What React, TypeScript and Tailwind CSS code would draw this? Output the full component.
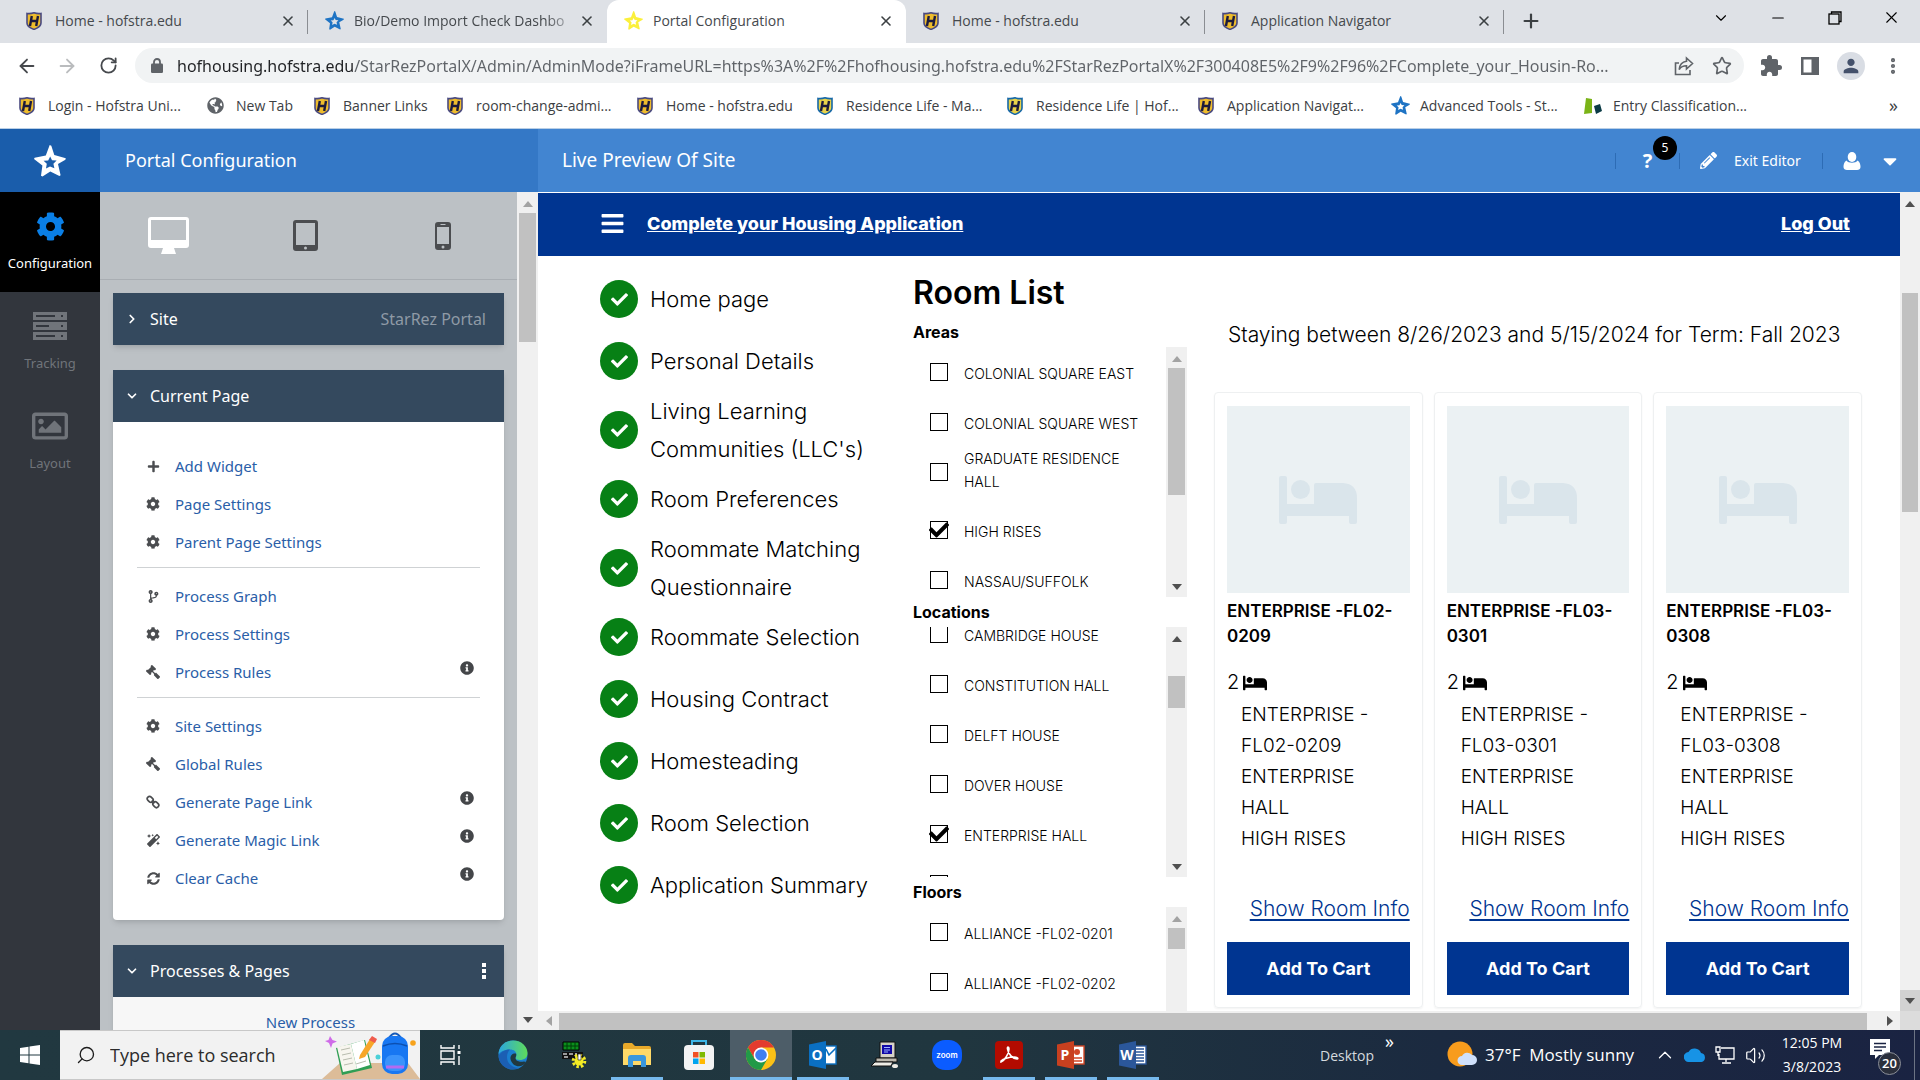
import React, { useState } from 'react';
import clsx from 'clsx';
import {
  FaBars,
  FaBed,
  FaCaretDown,
  FaCheck,
  FaCodeBranch,
  FaCog,
  FaGavel,
  FaGlobeAmericas,
  FaInfoCircle,
  FaMagic,
  FaPencilAlt,
  FaPlus,
  FaRegImage,
  FaSyncAlt,
} from 'react-icons/fa';
import { MdExtension, MdPerson } from 'react-icons/md';
import {
  ArrowLeft,
  ArrowRight,
  ChevronDown,
  ChevronRight,
  ChevronUp,
  Minus,
  MoreVertical,
  Plus,
  RotateCw,
  Search,
  Star,
  Volume2,
  X,
} from 'lucide-react';

/* ---------- small drawings ---------- */

const Shield: React.FC<{ blue?: boolean }> = ({ blue }) => (
  <svg viewBox="0 0 16 18" className="h-[18px] w-4 shrink-0">
    <path
      d="M1 1.5C4 2 6 1.5 8 .8 10 1.5 12 2 15 1.5V11c0 3-3 5-7 6.4C4 16 1 14 1 11Z"
      fill={blue ? '#e9d24a' : '#eebc2c'}
      stroke={blue ? '#1668a8' : '#4a4a80'}
      strokeWidth="1.6"
    />
    <path d="M5.800 4 4 14M12 4 10.200 14M5 9H11" fill="none" stroke="#1c1a3c" strokeWidth="2.4" />
  </svg>
);

const StarLogo: React.FC<{ className: string }> = ({ className }) => (
  <svg viewBox="0 0 32 32" className={clsx('shrink-0', className)} fill="currentColor" fillRule="evenodd">
    <path d="M15.700 0 17.300 .8 20.300 10 31.800 13.200 31.400 14.800 24 19 26.600 30.200 25.400 31 16.300 26.500 8.500 31.500 7 30.800 8.400 20.500 0 14 .6 12.800 11.800 10.600ZM16.200 11.600 14.200 15.400 9.600 15.800 12.800 18.800 12 23.600 16 21.400 20.400 23.200 19.400 18.800 22.600 15.400 18 15.200Z" />
  </svg>
);

const ServerRows = () => (
  <svg viewBox="0 0 34 28" className="h-7 w-[34px]" fill="currentColor" fillRule="evenodd">
    <path d="M0 0H34V8H0ZM3 3V5H22V3ZM28 3V5H30V3Z" />
    <path d="M0 10H34V18H0ZM3 13V15H16V13ZM28 13V15H30V13Z" />
    <path d="M0 20H34V28H0ZM3 23V25H22V23ZM28 23V25H30V23Z" />
  </svg>
);

const ChainLink = () => (
  <svg viewBox="0 0 14 14" className="size-[14px]" fill="none" stroke="currentColor" strokeWidth="1.7">
    <rect x="1" y="2" width="6.4" height="4.6" rx="2.3" transform="rotate(45 4.2 4.3)" />
    <rect x="6.6" y="7.4" width="6.4" height="4.6" rx="2.3" transform="rotate(45 9.8 9.7)" />
    <path d="M5.6 5.6 8.4 8.4" />
  </svg>
);

const Desktop = () => (
  <svg viewBox="0 0 41 37" className="h-[37px] w-[41px]" fill="currentColor" fillRule="evenodd">
    <path d="M3 0H38A3 3 0 0 1 41 3V28A3 3 0 0 1 38 31H26L28 37H13L15 31H3A3 3 0 0 1 0 28V3A3 3 0 0 1 3 0ZM3 3V23H38V3Z" />
  </svg>
);

const Tablet = () => (
  <svg viewBox="0 0 25 31" className="h-[31px] w-[25px]" fill="currentColor" fillRule="evenodd">
    <path d="M3 0H22A3 3 0 0 1 25 3V28A3 3 0 0 1 22 31H3A3 3 0 0 1 0 28V3A3 3 0 0 1 3 0ZM3 3V25H22V3ZM12.5 26.5A1.5 1.5 0 1 0 12.5 29.5 1.5 1.5 0 1 0 12.5 26.5Z" />
  </svg>
);

const Phone = () => (
  <svg viewBox="0 0 16 28" className="h-7 w-4" fill="currentColor" fillRule="evenodd">
    <path d="M3 0H13A3 3 0 0 1 16 3V25A3 3 0 0 1 13 28H3A3 3 0 0 1 0 25V3A3 3 0 0 1 3 0ZM2 5V22H14V5ZM5.5 2V3H10.5V2ZM8 23.5A1.5 1.5 0 1 0 8 26.5 1.5 1.5 0 1 0 8 23.5Z" />
  </svg>
);

const UserBust: React.FC = () => (
  <svg viewBox="0 0 18 18" className="size-[18px]" fill="currentColor">
    <ellipse cx="9" cy="5" rx="4.300" ry="5" />
    <path d="M3.500 8.500C5 11.500 13 11.500 14.500 8.500 17 10 17.500 13 17.500 15 17.500 17 16 18 14 18H4C2 18 .5 17 .5 15 .5 13 1 10 3.500 8.500Z" />
  </svg>
);

const BedPlaceholder = () => (
  <svg viewBox="0 0 78 48" className="h-12 w-[78px]" fill="#dae5eb">
    <path d="M2 0H6Q8 0 8 2V28H35V9Q35 7 37 7H64Q78 8 78 22V46Q78 48 76 48H72Q70 48 70 46V40H8V46Q8 48 6 48H2Q0 48 0 46V2Q0 0 2 0Z" />
    <circle cx="21.500" cy="13.500" r="9.500" />
  </svg>
);

/* ---------- scroll bars ---------- */

const Arrow: React.FC<{ dir: 'up' | 'down' | 'left' | 'right'; dim?: boolean }> = ({ dir, dim }) => (
  <svg
    viewBox="0 0 10 6"
    className={clsx(
      'h-[6px] w-[10px]',
      dir === 'down' && 'rotate-180',
      dir === 'left' && '-rotate-90',
      dir === 'right' && 'rotate-90',
      dim ? 'text-[#a3a3a3]' : 'text-[#505050]',
    )}
  >
    <path d="M0 6 5 0 10 6Z" fill="currentColor" />
  </svg>
);

const ScrollBar: React.FC<{ thumb: string; dimUp?: boolean; pressed?: boolean }> = ({ thumb, dimUp, pressed }) => (
  <div className={clsx('flex shrink-0 flex-col bg-[#f0f0f0]', pressed ? 'w-5' : 'w-[21px]')}>
    <button aria-label="Scroll up" className="flex h-[21px] shrink-0 items-center justify-center pt-[2px]">
      <Arrow dir="up" dim={dimUp} />
    </button>
    <div className={clsx('mx-[2px] shrink-0 bg-[#c1c1c1]', thumb)} />
    <div className="flex-1" />
    <button
      aria-label="Scroll down"
      className={clsx('flex h-[21px] shrink-0 items-center justify-center', pressed && 'bg-[#d2d2d2]')}
    >
      <Arrow dir="down" />
    </button>
  </div>
);

/* ---------- browser chrome ---------- */

const tabs = [
  { title: 'Home - hofstra.edu', icon: <Shield /> },
  { title: 'Bio/Demo Import Check Dashbo', icon: <StarLogo className="size-[19px] text-[#1f74c4]" />, fade: true },
  { title: 'Portal Configuration', icon: <StarLogo className="size-[19px] text-[#fbf03c]" />, active: true },
  { title: 'Home - hofstra.edu', icon: <Shield /> },
  { title: 'Application Navigator', icon: <Shield /> },
];

const TabStrip = () => (
  <div className="flex h-[43px] shrink-0 items-stretch bg-[#dee1e6] pl-[9px]">
    {tabs.map((tab, i) => (
      <div
        key={i}
        className={clsx(
          'relative flex w-[299px] min-w-0 items-center pr-3 pb-[2px] pl-4',
          tab.active && 'rounded-t-xl bg-white',
        )}
      >
        <span className="flex w-[30px] shrink-0 justify-start pl-px">{tab.icon}</span>
        <span
          className={clsx(
            'min-w-0 flex-1 text-[14px] whitespace-nowrap text-[#45494d]',
            tab.fade && '[mask-image:linear-gradient(to_right,black_85%,transparent)]',
          )}
        >
          {tab.title}
        </span>
        <button aria-label="Close tab" className="text-[#3c4043]">
          <X size={16} strokeWidth={2.4} />
        </button>
        {(i === 0 || i > 2) && <span className="absolute top-[10px] right-0 h-6 w-px bg-[#8a8d92]" />}
      </div>
    ))}
    <button aria-label="New tab" className="ml-4 pb-[2px] text-[#3c4043]">
      <Plus size={22} strokeWidth={2.4} />
    </button>
    <div className="ml-auto flex text-black">
      <button aria-label="Search tabs" className="flex w-[57px] items-center justify-center pb-2">
        <ChevronDown size={18} strokeWidth={1.5} />
      </button>
      <button aria-label="Minimize" className="flex w-[57px] items-center justify-center pb-2">
        <Minus size={18} strokeWidth={1.5} />
      </button>
      <button aria-label="Restore" className="flex w-[57px] items-center justify-center pb-2">
        <svg viewBox="0 0 14 14" className="size-[14px]" fill="none" stroke="currentColor" strokeWidth="1.3">
          <rect x="1" y="3" width="10" height="10" />
          <path d="M3.500 3V1H13V10.500H11" />
        </svg>
      </button>
      <button aria-label="Close" className="flex w-[57px] items-center justify-center pb-2">
        <X size={19} strokeWidth={1.4} />
      </button>
    </div>
  </div>
);

const AddressBar = () => {
  const [url, setUrl] = useState(
    'hofhousing.hofstra.edu/StarRezPortalX/Admin/AdminMode?iFrameURL=https%3A%2F%2Fhofhousing.hofstra.edu%2FStarRezPortalX%2F300408E5%2F9%2F96%2FComplete_your_Housin-Ro...',
  );

  return (
    <div className="flex h-[45px] shrink-0 items-center bg-white pl-[7px] text-[#5f6368]">
      <button aria-label="Back" className="flex w-10 justify-center text-[#46494d]">
        <ArrowLeft size={22} />
      </button>
      <button aria-label="Forward" className="flex w-10 justify-center text-[#babcbe]">
        <ArrowRight size={22} />
      </button>
      <button aria-label="Reload" className="flex w-[42px] justify-center text-[#46494d]">
        <RotateCw size={19} strokeWidth={2.3} />
      </button>
      <div className="ml-[6px] flex h-[35px] min-w-0 flex-1 items-center rounded-full bg-[#f1f3f4] pr-3 pl-4">
        <svg viewBox="0 0 12 15" className="h-[15px] w-3 shrink-0">
          <rect y="5.500" width="12" height="9.500" rx="1.200" fill="currentColor" />
          <path d="M3 6V4a3 3 0 0 1 6 0v2" fill="none" stroke="currentColor" strokeWidth="1.8" />
        </svg>
        <input
          aria-label="Address"
          value={url}
          onChange={(e) => setUrl(e.target.value)}
          className="ml-[14px] min-w-0 flex-1 bg-[linear-gradient(90deg,#202124_177px,#5f6368_177px)] bg-clip-text font-['Noto_Sans',sans-serif] text-[16px] text-transparent outline-none"
        />
        <button aria-label="Share" className="ml-3">
          <svg viewBox="0 0 20 20" className="size-5" fill="none" stroke="currentColor" strokeWidth="1.6">
            <path d="M5 7H1.500V18.500H16V14" />
            <path d="M12.500 2 18.500 7.500 12.500 13V9.800C9 9.800 6.800 11 5.200 13.500 5.600 9 8 5.800 12.500 5.200Z" />
          </svg>
        </button>
        <button aria-label="Bookmark" className="ml-[18px]">
          <Star size={20} />
        </button>
      </div>
      <button aria-label="Extensions" className="ml-[15px] flex">
        <MdExtension size={24} />
      </button>
      <button aria-label="Side panel" className="ml-[18px] flex">
        <svg viewBox="0 0 18 18" className="size-[18px]">
          <path d="M0 0H18V18H0ZM2.500 2.500V15.500H10.500V2.500Z" fill="currentColor" fillRule="evenodd" />
        </svg>
      </button>
      <button
        aria-label="Profile"
        className="mx-[18px] flex size-7 items-center justify-center rounded-full bg-[#d9dde4] text-[#44516b]"
      >
        <MdPerson size={22} />
      </button>
      <button aria-label="Menu" className="mr-[17px]">
        <MoreVertical size={20} strokeWidth={3} />
      </button>
    </div>
  );
};

const bookmarks = [
  { title: 'Login - Hofstra Uni...', icon: <Shield />, width: 'w-[188px]' },
  { title: 'New Tab', icon: <FaGlobeAmericas size={17} className="text-[#5f6368]" />, width: 'w-[107px]' },
  { title: 'Banner Links', icon: <Shield />, width: 'w-[133px]' },
  { title: 'room-change-admi...', icon: <Shield />, width: 'w-[190px]' },
  { title: 'Home - hofstra.edu', icon: <Shield />, width: 'w-[180px]' },
  { title: 'Residence Life - Ma...', icon: <Shield blue />, width: 'w-[190px]' },
  { title: 'Residence Life | Hof...', icon: <Shield blue />, width: 'w-[191px]' },
  { title: 'Application Navigat...', icon: <Shield />, width: 'w-[193px]' },
  { title: 'Advanced Tools - St...', icon: <StarLogo className="size-[19px] text-[#1f74c4]" />, width: 'w-[193px]' },
  {
    title: 'Entry Classification...',
    icon: (
      <svg viewBox="0 0 18 16" className="h-4 w-[18px]">
        <path d="M2 0 8 1 8 15 0 16Z" fill="#7ab317" />
        <path d="M10 8 16 6 18 13 12 16Z" fill="#0b3b46" />
      </svg>
    ),
    width: 'w-[190px]',
  },
];

const BookmarkBar = () => (
  <div className="flex h-[41px] shrink-0 items-center border-b border-[#b9cfe6] bg-white pr-[22px] pb-[5px] pl-[19px]">
    {bookmarks.map((b) => (
      <a key={b.title} href="#" className={clsx('flex shrink-0 items-center text-[#3c4043]', b.width)}>
        <span className="flex w-[29px] shrink-0">{b.icon}</span>
        <span className="text-[14px] whitespace-nowrap">{b.title}</span>
      </a>
    ))}
    <button aria-label="More bookmarks" className="ml-auto text-[18px] text-[#3c4043]">
      »
    </button>
  </div>
);

/* ---------- StarRez shell ---------- */

const AppHeader = () => (
  <header className="flex h-[63px] shrink-0 items-stretch bg-[#4285d1] font-['Noto_Sans',sans-serif] text-white">
    <a href="#" aria-label="StarRez" className="flex w-[100px] items-center justify-center bg-[#1a5dab]">
      <StarLogo className="size-8" />
    </a>
    <h1 className="flex w-[438px] items-center bg-[#3478c6] pl-[25px] text-[18px]">Portal Configuration</h1>
    <h2 className="flex flex-1 items-center pl-6 text-[19px]">Live Preview Of Site</h2>
    <div className="flex items-center">
      <span className="h-4 w-px bg-[#2d6cb5]" />
      <button aria-label="Help" className="relative flex w-[63px] justify-center text-[20px] font-bold">
        ?
        <span className="absolute -top-[10px] right-[2px] flex size-6 items-center justify-center rounded-full bg-black text-[12px] font-normal">
          5
        </span>
      </button>
      <span className="h-4 w-px bg-[#2d6cb5]" />
      <button className="flex w-[142px] items-center gap-[17px] pl-[20px] text-[14px] whitespace-nowrap">
        <FaPencilAlt size={17} />
        Exit Editor
      </button>
      <span className="h-4 w-px bg-[#2d6cb5]" />
      <button aria-label="Account" className="flex w-[97px] items-center gap-[18px] pl-[20px]">
        <UserBust />
        <FaCaretDown size={22} />
      </button>
    </div>
  </header>
);

const sections = [
  { label: 'Configuration', icon: <FaCog size={29} className="text-[#0a7fe6]" />, active: true },
  { label: 'Tracking', icon: <ServerRows /> },
  { label: 'Layout', icon: <FaRegImage size={36} /> },
];

const SideNav = () => (
  <nav className="w-[100px] shrink-0 bg-[#32363d] text-[#70747a]">
    {sections.map((s) => (
      <a
        key={s.label}
        href="#"
        className={clsx(
          'flex h-[100px] flex-col items-center pt-[16px] text-[13px]',
          s.active && 'bg-black text-white',
        )}
      >
        <span className="flex h-9 items-center">{s.icon}</span>
        <span className="mt-[10px]">{s.label}</span>
      </a>
    ))}
  </nav>
);

const menuGroups = [
  [
    { label: 'Add Widget', icon: <FaPlus size={13} /> },
    { label: 'Page Settings', icon: <FaCog size={14} /> },
    { label: 'Parent Page Settings', icon: <FaCog size={14} /> },
  ],
  [
    { label: 'Process Graph', icon: <FaCodeBranch size={13} /> },
    { label: 'Process Settings', icon: <FaCog size={14} /> },
    { label: 'Process Rules', icon: <FaGavel size={14} className="-scale-x-100" />, info: true },
  ],
  [
    { label: 'Site Settings', icon: <FaCog size={14} /> },
    { label: 'Global Rules', icon: <FaGavel size={14} className="-scale-x-100" /> },
    { label: 'Generate Page Link', icon: <ChainLink />, info: true },
    { label: 'Generate Magic Link', icon: <FaMagic size={13} />, info: true },
    { label: 'Clear Cache', icon: <FaSyncAlt size={13} />, info: true },
  ],
];

const CardHeader: React.FC<{ title: string; open?: boolean; children?: React.ReactNode }> = ({ title, open, children }) => (
  <button className="flex h-[52px] w-full items-center bg-[#34495e] pr-[18px] pl-3 text-[16px] text-white">
    <span className="flex w-[25px]">
      {open ? <ChevronDown size={14} strokeWidth={3} /> : <ChevronRight size={14} strokeWidth={3} />}
    </span>
    {title}
    <span className="ml-auto text-[#8f9aa6]">{children}</span>
  </button>
);

const ConfigPanel = () => (
  <div className="flex w-[438px] shrink-0">
    <div className="min-w-0 flex-1 overflow-hidden bg-[#bcc1c5]">
      <div className="grid h-[88px] grid-cols-3 border-b border-[#a9aeb3] pr-[6px] text-[#4b4d50]">
        <button aria-label="Desktop preview" className="flex items-center justify-center text-white">
          <Desktop />
        </button>
        <button aria-label="Tablet preview" className="flex items-center justify-center">
          <Tablet />
        </button>
        <button aria-label="Phone preview" className="flex items-center justify-center">
          <Phone />
        </button>
      </div>
      <div className="flex flex-col gap-[25px] px-[13px] pt-[13px]">
        <section className="shadow-md">
          <CardHeader title="Site">StarRez Portal</CardHeader>
        </section>
        <section className="overflow-hidden rounded-b-sm bg-white shadow-md">
          <CardHeader title="Current Page" open />
          <div className="px-6 pt-[25px] pb-[23px]">
            {menuGroups.map((group, g) => (
              <ul key={g} className={clsx(g > 0 && 'mt-[6px] border-t border-[#cfd2d4] pt-[9px]')}>
                {group.map((item) => (
                  <li key={item.label} className="flex h-[38px] items-center pr-[6px] text-[15px]">
                    <a href="#" className="flex items-center text-[#2a5ea8]">
                      <span className="flex w-8 justify-center text-[#4b4d50]">{item.icon}</span>
                      <span className="pl-[6px]">{item.label}</span>
                    </a>
                    {'info' in item && (
                      <button aria-label="More information" className="mb-2 ml-auto text-[#444649]">
                        <FaInfoCircle size={14} />
                      </button>
                    )}
                  </li>
                ))}
              </ul>
            ))}
          </div>
        </section>
        <section className="bg-[#f7f7f7] shadow-md">
          <CardHeader title="Processes & Pages" open>
            <span className="flex flex-col gap-[2px]">
              <span className="size-1 bg-white" />
              <span className="size-1 bg-white" />
              <span className="size-1 bg-white" />
            </span>
          </CardHeader>
          <a href="#" className="flex h-20 justify-center pt-[14px] pl-1 text-[15px] text-[#2a5ea8]">
            New Process
          </a>
        </section>
      </div>
    </div>
    <ScrollBar thumb="h-[129px]" dimUp />
  </div>
);

/* ---------- housing portal ---------- */

const steps = [
  'Home page',
  'Personal Details',
  "Living Learning Communities (LLC's)",
  'Room Preferences',
  'Roommate Matching Questionnaire',
  'Roommate Selection',
  'Housing Contract',
  'Homesteading',
  'Room Selection',
  'Application Summary',
];

const StepList = () => (
  <ol className="w-[313px] shrink-0 pt-3">
    {steps.map((step) => (
      <li key={step} className="flex min-h-[62px] items-center gap-3 text-[22px] leading-[38px] font-light">
        <span className="flex size-[38px] shrink-0 items-center justify-center rounded-full bg-[#078015] text-white">
          <FaCheck size={17} />
        </span>
        <a href="#" className="w-[230px]">
          {step}
        </a>
      </li>
    ))}
  </ol>
);

interface Option {
  label: string;
  checked?: boolean;
  tall?: boolean;
}

const filters: { title: string; options: Option[]; thumb: string; scrolled?: boolean }[] = [
  {
    title: 'Areas',
    thumb: 'h-[127px]',
    options: [
      { label: 'COLONIAL SQUARE EAST' },
      { label: 'COLONIAL SQUARE WEST' },
      { label: 'GRADUATE RESIDENCE HALL', tall: true },
      { label: 'HIGH RISES', checked: true },
      { label: 'NASSAU/SUFFOLK' },
    ],
  },
  {
    title: 'Locations',
    thumb: 'mt-7 h-8',
    scrolled: true,
    options: [
      { label: 'CAMBRIDGE HOUSE' },
      { label: 'CONSTITUTION HALL' },
      { label: 'DELFT HOUSE' },
      { label: 'DOVER HOUSE' },
      { label: 'ENTERPRISE HALL', checked: true },
      { label: 'ESTABROOK HALL' },
    ],
  },
  {
    title: 'Floors',
    thumb: 'h-[21px]',
    options: [{ label: 'ALLIANCE -FL02-0201' }, { label: 'ALLIANCE -FL02-0202' }],
  },
];

const FilterOption: React.FC<{ option: Option }> = ({ option }) => {
  const [checked, setChecked] = useState(!!option.checked);

  return (
    <label className={clsx('flex gap-4 pl-[17px]', option.tall && 'mb-2')}>
      <span className="relative mt-4 size-[18px] shrink-0">
        <input
          type="checkbox"
          checked={checked}
          onChange={(e) => setChecked(e.target.checked)}
          className="block size-[18px] appearance-none border border-black bg-white"
        />
        {checked && <FaCheck size={20} className="pointer-events-none absolute -top-px -left-px" />}
      </span>
      <span
        className={clsx(
          'flex h-[50px] w-[180px] items-center text-[14px] leading-[23px] font-light',
          option.tall ? 'pb-1' : 'pt-[3px]',
        )}
      >
        {option.label}
      </span>
    </label>
  );
};

const Filters = () => (
  <div className="w-[274px] shrink-0">
    <h2 className="flex h-[61px] items-center pt-[12px] text-[32px] font-semibold">Room List</h2>
    {filters.map((f) => (
      <fieldset key={f.title}>
        <legend className="h-[30px] text-[16px] leading-[30px] font-bold">{f.title}</legend>
        <div className="flex h-[250px]">
          <div className="flex-1 overflow-hidden">
            <div className={clsx(f.scrolled && '-mt-[18px]')}>
              {f.options.map((o) => (
                <FilterOption key={o.label} option={o} />
              ))}
            </div>
          </div>
          <ScrollBar thumb={f.thumb} dimUp={!f.scrolled} />
        </div>
      </fieldset>
    ))}
  </div>
);

const rooms = ['FL02-0209', 'FL03-0301', 'FL03-0308'];

const RoomCard: React.FC<{ room: string }> = ({ room }) => (
  <article className="rounded border border-[#eef0f1] px-3 pt-[13px] pb-3 shadow-xs">
    <div className="flex h-[187px] items-center justify-center bg-[#ebf1f3]">
      <BedPlaceholder />
    </div>
    <h3 className="mt-[6px] text-[17px] leading-[25px] font-semibold">ENTERPRISE -{room}</h3>
    <p className="mt-[18px] flex items-center gap-1 text-[20px] leading-[31px] font-light">
      2 <FaBed size={24} />
    </p>
    <ul className="mt-px pl-[14px] text-[19px] leading-[31px] font-light">
      <li>ENTERPRISE -{room}</li>
      <li className="w-[120px]">ENTERPRISE HALL</li>
      <li>HIGH RISES</li>
    </ul>
    <p className="mt-[39px] text-right text-[21px] leading-[31px] font-light">
      <a href="#" className="text-[#003591] underline underline-offset-3">
        Show Room Info
      </a>
    </p>
    <button className="mt-[18px] h-[53px] w-full bg-[#003591] text-[18px] font-bold text-white">Add To Cart</button>
  </article>
);

const Preview = () => (
  <div className="flex min-w-0 flex-1 flex-col">
    <div className="flex min-h-0 flex-1">
      <main className="min-w-0 flex-1 overflow-hidden bg-white pt-px font-[Inter,sans-serif] text-black">
        <div className="flex h-[63px] items-center bg-[#003591] pr-[50px] pb-[2px] pl-[62px] font-extrabold text-white">
          <button aria-label="Menu">
            <FaBars size={25} />
          </button>
          <a href="#" className="ml-[22px] text-[18px] underline">
            Complete your Housing Application
          </a>
          <a href="#" className="ml-auto text-[18px] underline">
            Log Out
          </a>
        </div>
        <div className="flex pr-[38px] pl-[62px]">
          <StepList />
          <Filters />
          <div className="ml-[27px] min-w-0 flex-1">
            <p className="h-[136px] pt-[63px] pl-[14px] text-[21px] leading-[31px] font-light whitespace-nowrap">
              Staying between 8/26/2023 and 5/15/2024 for Term: Fall 2023
            </p>
            <div className="grid grid-cols-3 gap-[11px]">
              {rooms.map((r) => (
                <RoomCard key={r} room={r} />
              ))}
            </div>
          </div>
        </div>
      </main>
      <ScrollBar thumb="mt-20 h-[219px]" pressed />
    </div>
    <div className="flex h-[19px] shrink-0 items-center bg-[#f0f0f0]">
      <button aria-label="Scroll left" className="flex w-[21px] justify-center">
        <Arrow dir="left" dim />
      </button>
      <div className="mt-[2px] h-[17px] flex-1 bg-[#c1c1c1]" />
      <button aria-label="Scroll right" className="flex w-[33px] justify-end pr-[5px]">
        <Arrow dir="right" />
      </button>
      <div className="h-full w-5 bg-[#dcdcdc]" />
    </div>
  </div>
);

/* ---------- taskbar ---------- */

const OfficeIcon: React.FC<{ letter: string; color: string; dark: string; children: React.ReactNode }> = ({
  letter,
  color,
  dark,
  children,
}) => (
  <svg viewBox="0 0 28 28" className="size-7">
    <rect x="13" y="5" width="14" height="18" fill="#fff" stroke={color} strokeWidth="1.4" />
    {children}
    <path d="M0 3.500 17 0V28L0 24.500Z" fill={dark} />
    <text x="8" y="19" textAnchor="middle" fontSize="14" fontWeight="700" fontFamily="Open Sans, sans-serif" fill="#fff">
      {letter}
    </text>
  </svg>
);

const apps: { name: string; icon: React.ReactNode; open?: boolean; active?: boolean }[] = [
  {
    name: 'Task View',
    icon: (
      <svg viewBox="0 0 22 20" className="h-5 w-[22px]" fill="none" stroke="#fff" strokeWidth="1.4">
        <path d="M1 0V3H14V0M1 20V17H14V20M1 6H14V14H1ZM19 0V4M19 11V20" />
        <path d="M17.500 7.500H20.500" strokeWidth="3" />
      </svg>
    ),
  },
  {
    name: 'Edge',
    icon: (
      <svg viewBox="0 0 30 30" className="size-[30px]">
        <defs>
          <linearGradient id="edgeTop" x1="0" x2="1">
            <stop offset="0" stopColor="#2aa6e0" />
            <stop offset="1" stopColor="#5fdc5a" />
          </linearGradient>
        </defs>
        <circle cx="15" cy="15" r="14.500" fill="#1a7fd0" />
        <path d="M.5 14C1 6 7 .5 15 .5 24 .5 29.500 7 29.500 13 29.500 18 26 20 22 20 18 20 17 18.500 18 17 19.500 13 17 9.500 12 9.500 6 9.500 2 12 .5 14Z" fill="url(#edgeTop)" />
        <path d="M9 17C9 24 15 28 21 28 11 32 1 26 .6 16 3 11 8 9.500 12 9.500 10 11 9 14 9 17Z" fill="#1b5fb4" />
        <path d="M17.500 17.500C17 20 20 22.500 26 21.500L28 22C24 29 14 27 12.500 19 12 15 15 13 18 13.500 18.600 15 18 16.500 17.500 17.500Z" fill="#213840" />
      </svg>
    ),
  },
  {
    name: 'Banner',
    icon: (
      <svg viewBox="0 0 28 28" className="size-7">
        <path d="M2 1H18V9H2Z" fill="#0b8f1c" stroke="#000" />
        <path d="M6 1V9M10 1V9M14 1V9M2 5H18" stroke="#013d08" />
        <path d="M1 11H22V18H1Z" fill="#111" />
        <path d="M2 13H6M8 13H12M3 16H7M15 12V17" stroke="#c9c9c9" strokeWidth="1.6" />
        <circle cx="18" cy="20" r="4.500" fill="#f4ec25" />
        <circle cx="18" cy="20" r="5.800" fill="none" stroke="#f4ec25" strokeWidth="3" strokeDasharray="2.500 2" />
        <path d="M17 13H20V19H17Z" fill="#fff" stroke="#111" strokeWidth=".6" />
      </svg>
    ),
  },
  {
    name: 'File Explorer',
    open: true,
    icon: (
      <svg viewBox="0 0 28 24" className="h-6 w-7">
        <path d="M0 2Q0 0 2 0H9L12 3H26Q28 3 28 5V22H0Z" fill="#e8a92a" />
        <path d="M0 6H28V22H0Z" fill="#ffd968" />
        <path d="M5 24V15Q5 12 8 12H20Q23 12 23 15V24H18V18H10V24Z" fill="#3a97dd" />
      </svg>
    ),
  },
  {
    name: 'Store',
    icon: (
      <svg viewBox="0 0 30 30" className="size-[30px]">
        <path d="M8 6V1H22V6" fill="none" stroke="#3db5e6" strokeWidth="2" />
        <rect y="5" width="30" height="25" rx="4" fill="#f3f3f3" />
        <path d="M9 12H14.500V17.500H9Z" fill="#f25022" />
        <path d="M15.500 12H21V17.500H15.500Z" fill="#7fba00" />
        <path d="M9 18.500H14.500V24H9Z" fill="#00a4ef" />
        <path d="M15.500 18.500H21V24H15.500Z" fill="#ffb900" />
      </svg>
    ),
  },
  {
    name: 'Chrome',
    open: true,
    active: true,
    icon: (
      <svg viewBox="0 0 30 30" className="size-[30px]">
        <circle cx="15" cy="15" r="15" fill="#fbc116" />
        <path d="M2 7.500A15 15 0 0 1 28 7.500H15L8.500 18.700Z" fill="#e33b2e" />
        <path d="M2 7.500A15 15 0 0 0 15 30L21.500 18.700 8.500 18.700Z" fill="#229a48" />
        <circle cx="15" cy="15" r="7.400" fill="#fff" />
        <circle cx="15" cy="15" r="5.800" fill="#3f7ff0" />
      </svg>
    ),
  },
  {
    name: 'Outlook',
    open: true,
    icon: (
      <OfficeIcon letter="O" color="#0a6fc2" dark="#0a6fc2">
        <path d="M17 8 20 14 27 7" fill="none" stroke="#0a6fc2" strokeWidth="1.6" />
      </OfficeIcon>
    ),
  },
  {
    name: 'Terminal',
    icon: (
      <svg viewBox="0 0 28 28" className="size-7">
        <path d="M9 1H24V17H9Z" fill="#d6d2c8" stroke="#111" />
        <path d="M11 4H21V13H11Z" fill="#1109a8" />
        <path d="M13 6.500H19M13 9H19M13 11H17" stroke="#9fb4ff" />
        <path d="M5 17H26V21H5Z" fill="#bdb9ae" stroke="#111" />
        <path d="M0 25 4 21H22L20 25Z" fill="#efede6" stroke="#111" />
        <ellipse cx="24" cy="25" rx="3" ry="2" fill="#efede6" />
      </svg>
    ),
  },
  {
    name: 'Zoom',
    icon: (
      <svg viewBox="0 0 30 30" className="size-[30px]">
        <rect width="30" height="30" rx="13" fill="#0b5cff" />
        <text x="15" y="18" textAnchor="middle" fontSize="8" fontWeight="600" fontFamily="Inter, sans-serif" fill="#fff">
          zoom
        </text>
      </svg>
    ),
  },
  {
    name: 'Acrobat',
    open: true,
    icon: (
      <svg viewBox="0 0 28 28" className="size-7">
        <rect width="28" height="28" rx="4" fill="#b30b00" />
        <path d="M6 21C9 20 14 13 14 8 14 5.500 12 5.500 12.500 8 13 13 18 18 22 18 24 17.500 22 16 19 16 14 16 8 18 6 20Z" fill="none" stroke="#fff" strokeWidth="1.6" />
      </svg>
    ),
  },
  {
    name: 'PowerPoint',
    open: true,
    icon: (
      <OfficeIcon letter="P" color="#d24726" dark="#c8401f">
        <circle cx="20" cy="11" r="3" fill="#d24726" />
        <path d="M17 17H25M17 20H25" stroke="#d24726" strokeWidth="1.4" />
      </OfficeIcon>
    ),
  },
  {
    name: 'Word',
    open: true,
    icon: (
      <OfficeIcon letter="W" color="#2b579a" dark="#2b579a">
        <path d="M17 8H25M17 11H25M17 14H25M17 17H25M17 20H25" stroke="#2b579a" strokeWidth="1.4" />
      </OfficeIcon>
    ),
  },
];

const SchoolArt = () => (
  <svg viewBox="0 0 98 48" className="h-12 w-[98px] shrink-0">
    <path d="M0 48 18 32H86L98 48Z" fill="#dcbc98" />
    <path d="M8 5 10.500 9 15 10.500 10.500 12.500 9 17 7 12 3 10 6.500 9Z" fill="#cf6be8" />
    <path d="M14 17 43 9 50 37 20 44Z" fill="#2f9e54" />
    <path d="M15 16 29 13 35 38 21 41Z" fill="#f7f5ee" />
    <path d="M29 13 42 9 48 34 35 38Z" fill="#fff" />
    <path d="M19 19 28 17M20 24 29 22M21 29 30 27M22 34 31 32M34 33 44 30" stroke="#b8bcae" />
    <path d="M38 24 48 8 53 11 43 26 37 28Z" fill="#f7a629" />
    <path d="M47 9 50 5 55 8 53 12Z" fill="#ef5b4c" />
    <circle cx="56" cy="26" r="2.500" fill="#4bd0d8" />
    <circle cx="91" cy="12" r="2.800" fill="#f7a21b" />
    <path d="M67 7Q73-2 79 7" fill="none" stroke="#1559b8" strokeWidth="2" />
    <rect x="60" y="5" width="26" height="38" rx="10" fill="#1877f2" />
    <path d="M61 15Q73 10 85 15" fill="none" stroke="#0c4fb0" strokeWidth="1.500" />
    <rect x="63" y="24" width="20" height="16" rx="7" fill="#3b93fb" />
    <path d="M64 36H82" stroke="#b46bf0" strokeWidth="3" />
  </svg>
);

const Taskbar = () => (
  <footer className="flex h-[50px] shrink-0 items-stretch bg-[linear-gradient(90deg,#213840_0%,#20363f_50%,#1b2a40_75%,#1a2342_100%)] text-white">
    <button aria-label="Start" className="flex w-[60px] items-center justify-center">
      <svg viewBox="0 0 20 20" className="size-5" fill="#fff">
        <path d="M0 3 8.500 1.800V9.500H0ZM9.500 1.600 20 0V9.500H9.500ZM0 10.500H8.500V18.200L0 17ZM9.500 10.500H20V20L9.500 18.400Z" />
      </svg>
    </button>
    <label className="flex w-[360px] items-center border-y border-[#c8c8c8] bg-[#f2f2f2] pl-4 text-[#1c1c1c]">
      <Search size={20} strokeWidth={1.6} className="shrink-0 -scale-x-100" />
      <input
        placeholder="Type here to search"
        className="ml-[14px] min-w-0 flex-1 text-[18px] outline-none placeholder:text-[#2b2b2b]"
      />
      <SchoolArt />
    </label>
    {apps.map((app) => (
      <button
        key={app.name}
        aria-label={app.name}
        className={clsx('relative flex w-[62px] items-center justify-center', app.active && 'bg-[#4d5d68]')}
      >
        {app.icon}
        {app.open && (
          <span className={clsx('absolute bottom-0 h-[3px] bg-[#76b9ed]', app.active ? 'inset-x-0' : 'inset-x-[5px]')} />
        )}
      </button>
    ))}
    <div className="ml-auto flex items-center">
      <button className="flex w-[120px] items-center gap-[11px] text-[14px] text-[#d5dade]">
        Desktop <span className="mb-7 text-[18px] text-white">»</span>
      </button>
      <button className="flex w-[210px] items-center gap-[8px] pl-[7px] text-[17px] whitespace-pre">
        <svg viewBox="0 0 30 28" className="h-7 w-[30px] shrink-0">
          <circle cx="13" cy="13" r="12.500" fill="#f89c1c" />
          <path d="M15 24a4.500 4.500 0 0 1 0-9 6 6 0 0 1 10-1 5 5 0 0 1 0 10Z" fill="#cfe0fa" />
        </svg>
        {'37°F  Mostly sunny'}
      </button>
      <button aria-label="Show hidden icons" className="flex w-[30px] justify-center">
        <ChevronUp size={22} strokeWidth={1.4} />
      </button>
      <button aria-label="OneDrive" className="flex w-[30px] justify-center">
        <svg viewBox="0 0 22 14" className="h-[14px] w-[22px]">
          <path d="M5 14A5 5 0 0 1 4.500 4 7 7 0 0 1 17 5 4.600 4.600 0 0 1 17.500 14Z" fill="#1793e6" />
        </svg>
      </button>
      <button aria-label="Network" className="flex w-[30px] justify-center">
        <svg viewBox="0 0 20 18" className="h-[18px] w-5" fill="none" stroke="#fff" strokeWidth="1.3">
          <path d="M6 2H19V13H4V8M11 13V16M7 17H16M1 1H5V6H1ZM3 6V10" />
        </svg>
      </button>
      <button aria-label="Volume" className="flex w-[30px] justify-center">
        <Volume2 size={21} strokeWidth={1.4} />
      </button>
      <button className="w-[84px] text-center text-[14px] leading-6">
        12:05 PM
        <br />
        3/8/2023
      </button>
      <button aria-label="Notifications" className="relative flex h-full w-[60px] items-center justify-center pr-2 pb-3">
        <svg viewBox="0 0 20 20" className="size-5">
          <path d="M0 0H20V16H9L5 20V16H0Z" fill="#fff" />
          <path d="M4 4.500H16M4 8H16M4 11.500H12" stroke="#1a2342" strokeWidth="1.400" />
        </svg>
        <span className="absolute top-[22px] left-6 flex size-[23px] items-center justify-center rounded-full border border-[#8b8f99] bg-[#2a2f3c] text-[13px] font-semibold">
          20
        </span>
      </button>
      <span className="mr-[5px] h-full w-px bg-[#6c7484]" />
    </div>
  </footer>
);

const App: React.FC = () => (
  <div className="flex h-screen flex-col overflow-hidden font-['Open_Sans',sans-serif]">
    <TabStrip />
    <AddressBar />
    <BookmarkBar />
    <AppHeader />
    <div className="flex min-h-0 flex-1 font-['Noto_Sans',sans-serif]">
      <SideNav />
      <ConfigPanel />
      <Preview />
    </div>
    <Taskbar />
  </div>
);

export default App;
